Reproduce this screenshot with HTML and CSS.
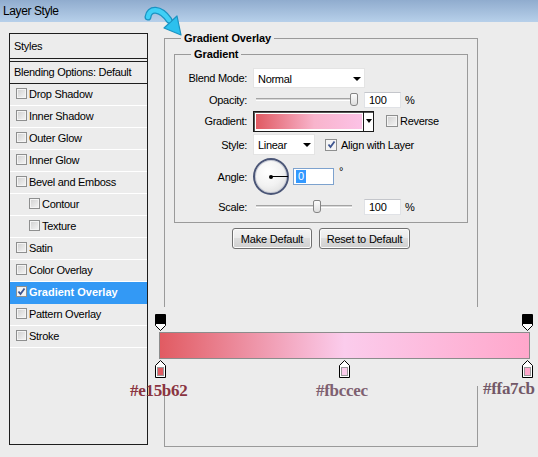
FILE: index.html
```html
<!DOCTYPE html>
<html>
<head>
<meta charset="utf-8">
<title>Layer Style</title>
<link rel="stylesheet" href="styles.css">
</head>
<body>
<div class="window">
  <div class="titlebar">Layer Style</div>
  <div class="content">
    <div class="styles-panel">
      <div class="row head">Styles</div>
      <div class="row blend">Blending Options: Default</div>
      <div class="row"><span class="cb"></span>Drop Shadow</div>
      <div class="row"><span class="cb"></span>Inner Shadow</div>
      <div class="row"><span class="cb"></span>Outer Glow</div>
      <div class="row"><span class="cb"></span>Inner Glow</div>
      <div class="row"><span class="cb"></span>Bevel and Emboss</div>
      <div class="row indent"><span class="cb"></span>Contour</div>
      <div class="row indent"><span class="cb"></span>Texture</div>
      <div class="row"><span class="cb"></span>Satin</div>
      <div class="row"><span class="cb"></span>Color Overlay</div>
      <div class="row active"><span class="cb checked"><svg viewBox="0 0 9 9" width="9" height="9"><path d="M1.5 4.5L3.5 7L7.5 1.5" fill="none" stroke="#3d5590" stroke-width="1.8"/></svg></span>Gradient Overlay</div>
      <div class="row"><span class="cb"></span>Pattern Overlay</div>
      <div class="row"><span class="cb"></span>Stroke</div>
    </div>

    <fieldset class="outer">
      <legend>Gradient Overlay</legend>
      <fieldset class="inner">
        <legend>Gradient</legend>
        <div class="form">
          <label>Blend Mode:</label>
          <div class="ctl"><div class="select blendmode"><span>Normal</span><i class="tri"></i></div></div>

          <label>Opacity:</label>
          <div class="ctl">
            <div class="slider"><div class="track"></div><div class="thumb" style="left:97px"></div></div>
            <div class="num">100</div><span class="unit">%</span>
          </div>

          <label>Gradient:</label>
          <div class="ctl">
            <div class="swatch"><div class="grad"></div><div class="drop"><i class="tri"></i></div></div>
            <span class="cb reverse"></span><span>Reverse</span>
          </div>

          <label>Style:</label>
          <div class="ctl">
            <div class="select stylesel"><span>Linear</span><i class="tri"></i></div>
            <span class="cb checked align"><svg viewBox="0 0 9 9" width="9" height="9"><path d="M1.5 4.5L3.5 7L7.5 1.5" fill="none" stroke="#3d5590" stroke-width="1.8"/></svg></span><span>Align with Layer</span>
          </div>

          <label>Angle:</label>
          <div class="ctl">
            <div class="dial"><span class="hand"></span><span class="dot"></span></div>
            <div class="num angle"><span class="sel">0</span></div><span class="deg">°</span>
          </div>

          <label>Scale:</label>
          <div class="ctl">
            <div class="slider"><div class="track"></div><div class="thumb" style="left:60px"></div></div>
            <div class="num">100</div><span class="unit">%</span>
          </div>
        </div>
      </fieldset>
      <div class="buttons">
        <button class="btn make">Make Default</button>
        <button class="btn reset">Reset to Default</button>
      </div>
    </fieldset>
  </div>

  <svg class="arrow" width="50" height="40" viewBox="0 0 50 40">
    <path d="M8 17 C9 8 20 7 29 20" fill="none" stroke="#1b93c2" stroke-width="7" stroke-linecap="round"/>
    <path d="M24 28 L37 16 L41 35 Z" fill="#2cc0ee" stroke="#1b93c2" stroke-width="1.2" stroke-linejoin="round"/>
    <path d="M8 17 C9 8 20 7 29 20" fill="none" stroke="#3fd0f6" stroke-width="4.5" stroke-linecap="round"/>
  </svg>

  <div class="annot">
    <svg class="ostop s-left" width="11" height="17" viewBox="0 0 11 17"><path d="M0.5 0.5H10.5V11.5L5.5 16.5L0.5 11.5Z" fill="#fff" stroke="#000"/><rect x="1" y="1" width="9" height="9" fill="#000"/></svg>
    <svg class="ostop s-right" width="11" height="17" viewBox="0 0 11 17"><path d="M0.5 0.5H10.5V11.5L5.5 16.5L0.5 11.5Z" fill="#fff" stroke="#000"/><rect x="1" y="1" width="9" height="9" fill="#000"/></svg>
    <div class="bar"></div>
    <svg class="cstop s-left" width="11" height="18" viewBox="0 0 11 18"><path d="M0.5 5.5L5.5 0.5L10.5 5.5V17.5H0.5Z" fill="#fff" stroke="#000"/><rect x="2.5" y="7.5" width="6" height="8" fill="#e15b62" stroke="#999" stroke-width="1"/></svg>
    <svg class="cstop s-mid" width="11" height="18" viewBox="0 0 11 18"><path d="M0.5 5.5L5.5 0.5L10.5 5.5V17.5H0.5Z" fill="#fff" stroke="#000"/><rect x="2.5" y="7.5" width="6" height="8" fill="#fbccec" stroke="#999" stroke-width="1"/></svg>
    <svg class="cstop s-right" width="11" height="18" viewBox="0 0 11 18"><path d="M0.5 5.5L5.5 0.5L10.5 5.5V17.5H0.5Z" fill="#fff" stroke="#000"/><rect x="2.5" y="7.5" width="6" height="8" fill="#ffa7cb" stroke="#999" stroke-width="1"/></svg>
    <span class="hex h-left">#e15b62</span>
    <span class="hex h-mid">#fbccec</span>
    <span class="hex h-right">#ffa7cb</span>
  </div>
</div>
</body>
</html>
```

FILE: styles.css
```css
* { box-sizing: border-box; }
html, body { margin: 0; padding: 0; }
body {
  width: 538px;
  height: 457px;
  overflow: hidden;
  background: #ececec;
  font-family: "Liberation Sans", Arial, sans-serif;
  font-size: 11px;
  letter-spacing: -0.3px;
  color: #000;
}
.window {
  position: relative;
  width: 538px;
  height: 457px;
  background: #ececec;
  overflow: hidden;
}
.titlebar {
  height: 22px;
  line-height: 22px;
  padding-left: 3px;
  font-size: 12px;
  letter-spacing: -0.4px;
  background: linear-gradient(#90acce, #b7d0ea);
}
.content {
  display: flex;
  align-items: flex-start;
  padding: 9px 0 0 9px;
}

/* left styles list */
.styles-panel {
  width: 139px;
  height: 412px;
  margin-top: 2px;
  border: 1px solid #1e1e1e;
  display: flex;
  flex-direction: column;
}
.row {
  display: flex;
  align-items: center;
  height: 22px;
  flex: none;
  border-bottom: 1px solid #fff;
  padding-left: 6px;
  padding-bottom: 2px;
  white-space: nowrap;
}
.row.head {
  height: 25px;
  padding-left: 4px;
  padding-bottom: 0;
  border-bottom: 1px solid #1e1e1e;
}
.row.blend {
  height: 23px;
  margin-top: 2px;
  padding-left: 4px;
  padding-bottom: 1px;
  border-top: 1px solid #1e1e1e;
  border-bottom: 1px solid #1e1e1e;
}
.row.indent { padding-left: 19px; }
.row.active {
  background: #3399f5;
  color: #fff;
  font-weight: bold;
  letter-spacing: 0;
  border-bottom-color: #3399f5;
}
.cb {
  display: inline-flex;
  align-items: center;
  justify-content: center;
  width: 11px;
  height: 11px;
  flex: none;
  margin-right: 2px;
  border: 1px solid #8e8f8f;
  background: linear-gradient(135deg, #cfcfcf, #f6f6f6);
  box-shadow: inset 0 0 0 1px #f4f4f4;
}
.cb svg { display: block; }
.row.active .cb { background: #f4f4f4; }

/* fieldsets */
fieldset {
  margin: 0;
  padding: 0;
  border: 1px solid #9a9a9a;
  min-width: 0;
}
legend {
  padding: 0 3px;
  font-weight: bold;
  line-height: 14px;
  letter-spacing: -0.1px;
}
.outer {
  width: 314px;
  height: 416px;
  margin-left: 16px;
}
.outer > legend { margin-left: 16px; }
.inner {
  margin: 2px 9px 0 9px;
  height: 176px;
}
.inner > legend { margin-left: 16px; }

.form {
  display: grid;
  grid-template-columns: 72px 1fr;
  grid-template-rows: 20px 17px 20px 21px 37px 17px;
  column-gap: 6px;
  row-gap: 3px;
  padding-top: 7px;
}
.form label {
  text-align: right;
  align-self: center;
  white-space: nowrap;
}
.ctl {
  display: flex;
  align-items: center;
  white-space: nowrap;
}
.select {
  display: flex;
  align-items: center;
  justify-content: space-between;
  height: 20px;
  padding: 1px 3px 0 4px;
  background: #fff;
  border: 1px solid #e4e4e4;
}
.select.blendmode { width: 112px; }
.select.stylesel { width: 62px; height: 21px; }
.tri {
  display: block;
  width: 0;
  height: 0;
  border-left: 4px solid transparent;
  border-right: 4px solid transparent;
  border-top: 4px solid #000;
}
.slider {
  position: relative;
  width: 108px;
  height: 14px;
  display: flex;
  align-items: center;
}
.track {
  flex: 1;
  margin: 0 9px 0 3px;
  height: 3px;
  border-top: 1px solid #a4a4a4;
  border-bottom: 1px solid #fff;
  background: #d8d8d8;
}
.thumb {
  position: absolute;
  top: 0;
  width: 8px;
  height: 13px;
  border: 1px solid #858585;
  border-radius: 2px 2px 3px 3px;
  background: linear-gradient(#fdfdfd, #dedede);
}
.num {
  width: 37px;
  height: 16px;
  margin-left: 3px;
  padding: 1px 0 0 4px;
  line-height: 13px;
  background: #fff;
  border: 1px solid #e0e2e6;
  border-top-color: #c4c6cb;
}
.unit { margin-left: 4px; }

.swatch {
  display: flex;
  width: 121px;
  height: 21px;
  background: #fff;
  border: 1px solid #1a1a1a;
  box-shadow: inset 1px 1px 0 #555;
}
.grad {
  flex: 1;
  margin: 2px 1px 2px 2px;
  background: linear-gradient(90deg, #e05a62, #f8b4cc 55%, #fcc2e6);
}
.drop {
  width: 10px;
  display: flex;
  align-items: center;
  justify-content: center;
  border-left: 1px solid #1a1a1a;
}
.drop .tri {
  border-left-width: 3px;
  border-right-width: 3px;
  border-top-width: 4px;
}
.cb.reverse { width: 12px; height: 12px; margin-left: 12px; margin-right: 2px; }
.cb.align { width: 12px; height: 12px; margin-left: 10px; margin-right: 4px; background: #f4f4f4; }

.dial {
  position: relative;
  width: 36px;
  height: 37px;
  border-radius: 50%;
  border: 2px solid #4a5576;
  background: radial-gradient(circle at 40% 35%, #ffffff, #f2f2f2 50%, #d6d6d6);
  box-shadow: inset 0 0 0 1px #c9ccd6;
  flex: none;
}
.hand {
  position: absolute;
  left: 16px;
  top: 16px;
  width: 17px;
  height: 1px;
  background: #000;
}
.dot {
  position: absolute;
  left: 14px;
  top: 15px;
  width: 4px;
  height: 4px;
  border-radius: 50%;
  background: #000;
}
.num.angle {
  width: 41px;
  height: 17px;
  margin-left: 4px;
  padding: 1px 0 0 2px;
  border: 1px solid #7da2ce;
}
.sel {
  display: inline-block;
  background: #3399ff;
  color: #fff;
  padding: 0 2px;
  line-height: 13px;
}
.deg {
  margin-left: 5px;
  align-self: flex-start;
  margin-top: 8px;
  line-height: 11px;
}

.buttons {
  display: flex;
  justify-content: center;
  gap: 7px;
  margin-top: 5px;
}
.btn {
  height: 21px;
  padding: 0;
  font-family: "Liberation Sans", Arial, sans-serif;
  font-size: 11px;
  letter-spacing: -0.2px;
  color: #000;
  border: 1px solid #707070;
  border-radius: 3px;
  background: linear-gradient(#f3f3f3 0%, #ebebeb 45%, #dddddd 50%, #cfcfcf 100%);
  box-shadow: inset 0 0 0 1px #fcfcfc;
}
.btn.make { width: 80px; }
.btn.reset { width: 91px; }

/* annotation arrow */
.arrow {
  position: absolute;
  left: 140px;
  top: 0;
}

/* gradient editor annotation */
.annot {
  position: absolute;
  left: 150px;
  top: 307px;
  width: 388px;
  height: 79px;
  padding: 25px 0 0 9px;
  background: #ececec;
}
.bar {
  width: 371px;
  height: 27px;
  border: 1px solid #8c8c8c;
  background: linear-gradient(90deg, #e15b62 0%, #fbccec 50%, #ffa7cb 100%);
}
.ostop, .cstop { position: absolute; display: block; }
.ostop { top: 7px; }
.cstop { top: 53px; }
.s-left { left: 5px; }
.s-mid { left: 189px; }
.s-right { left: 372px; }
.hex {
  position: absolute;
  font-family: "Liberation Serif", "Times New Roman", serif;
  font-size: 17px;
  font-weight: bold;
  letter-spacing: -0.3px;
  line-height: 20px;
  white-space: nowrap;
}
.h-left { left: -20px; top: 74px; color: #8a3441; }
.h-mid { left: 166px; top: 74px; color: #7e6070; }
.h-right { left: 333px; top: 72px; color: #725868; }
```
